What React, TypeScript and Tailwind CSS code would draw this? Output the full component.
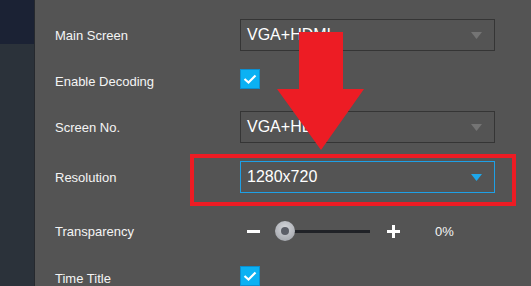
export default function App() {
  const font = { fontFamily: '"Liberation Sans", Arial, sans-serif' };

  return (
    <div
      className="relative flex h-[286px] w-[531px] overflow-hidden bg-[#545454] text-[#f4f4f4]"
      style={font}
    >
      {/* sidebar */}
      <div className="flex w-[35px] shrink-0 flex-col border-r border-[#26292e]">
        <div className="h-[44px] bg-[#1b2234]" />
        <div className="flex-1 bg-[#2b323a]" />
      </div>

      {/* form */}
      <div className="flex flex-1 flex-col pl-[20px] pt-[19px] text-[13px]">
        <div className="flex h-[32px] items-center">
          <span className="mt-[1px] w-[185px]">Main Screen</span>
          <Select value="VGA+HDMI" />
        </div>

        <div className="mt-[18px] flex h-[20px] items-center">
          <span className="mt-[5px] w-[185px]">Enable Decoding</span>
          <Checkbox />
        </div>

        <div className="mt-[22px] flex h-[32px] items-center">
          <span className="mt-[1px] w-[185px]">Screen No.</span>
          <Select value="VGA+HDMI" />
        </div>

        <div className="mt-[18px] flex h-[32px] items-center">
          <span className="mt-[1px] w-[185px]">Resolution</span>
          <Select value="1280x720" active />
        </div>

        <div className="mt-[26px] flex h-[24px] items-center">
          <span className="mt-[2px] w-[192px]">Transparency</span>
          <div className="h-[3px] w-[13px] bg-white" />
          <div className="relative ml-[15px] flex h-[20px] w-[95px] items-center">
            <div className="ml-[10px] h-[3px] flex-1 bg-[#202227]" />
            <div className="absolute left-0 top-0 flex h-[20px] w-[20px] items-center justify-center rounded-full bg-[radial-gradient(circle_at_50%_35%,#d4d6da,#9a9da4)]">
              <div className="h-[8px] w-[8px] rounded-full bg-[#5b5e67]" />
            </div>
          </div>
          <svg className="ml-[17px]" width="13" height="13" viewBox="0 0 13 13">
            <rect x="0" y="5" width="13" height="3" fill="white" />
            <rect x="5" y="0" width="3" height="13" fill="white" />
          </svg>
          <span className="ml-[35px] mt-[2px]">0%</span>
        </div>

        <div className="mt-[23px] flex h-[20px] items-center">
          <span className="mt-[5px] w-[185px]">Time Title</span>
          <Checkbox />
        </div>
      </div>

      {/* annotation: red box */}
      <div className="pointer-events-none absolute left-[190px] top-[154px] h-[52px] w-[326px] border-[4px] border-[#ed1c24]" />

      {/* annotation: red arrow */}
      <svg
        className="pointer-events-none absolute left-0 top-0"
        width="531"
        height="286"
        viewBox="0 0 531 286"
      >
        <polygon
          points="299,32 343,32 343,89 364,89 321,150 277,89 299,89"
          fill="#ed1c24"
        />
      </svg>
    </div>
  );
}

function Select({ value, active = false }: { value: string; active?: boolean }) {
  return (
    <div
      className={
        active
          ? "flex h-[32px] w-[255px] items-center justify-between border border-[#1ea0e6] pl-[6px] pr-[12px]"
          : "flex h-[32px] w-[255px] items-center justify-between border border-[#353535] pl-[6px] pr-[12px]"
      }
    >
      <span className="text-[16px] text-white">{value}</span>
      <svg width="11" height="7" viewBox="0 0 11 7">
        <polygon points="0,0 11,0 5.5,7" fill={active ? "#1ea7ea" : "#747474"} />
      </svg>
    </div>
  );
}

function Checkbox() {
  return (
    <div className="flex h-[20px] w-[20px] items-center justify-center border border-[#0b8fd0] bg-[#0bb1f3]">
      <svg width="14" height="10" viewBox="0 0 14 10">
        <path d="M1.5 5 L5.5 8.5 L12.5 1.5" fill="none" stroke="white" strokeWidth="2.2" />
      </svg>
    </div>
  );
}
